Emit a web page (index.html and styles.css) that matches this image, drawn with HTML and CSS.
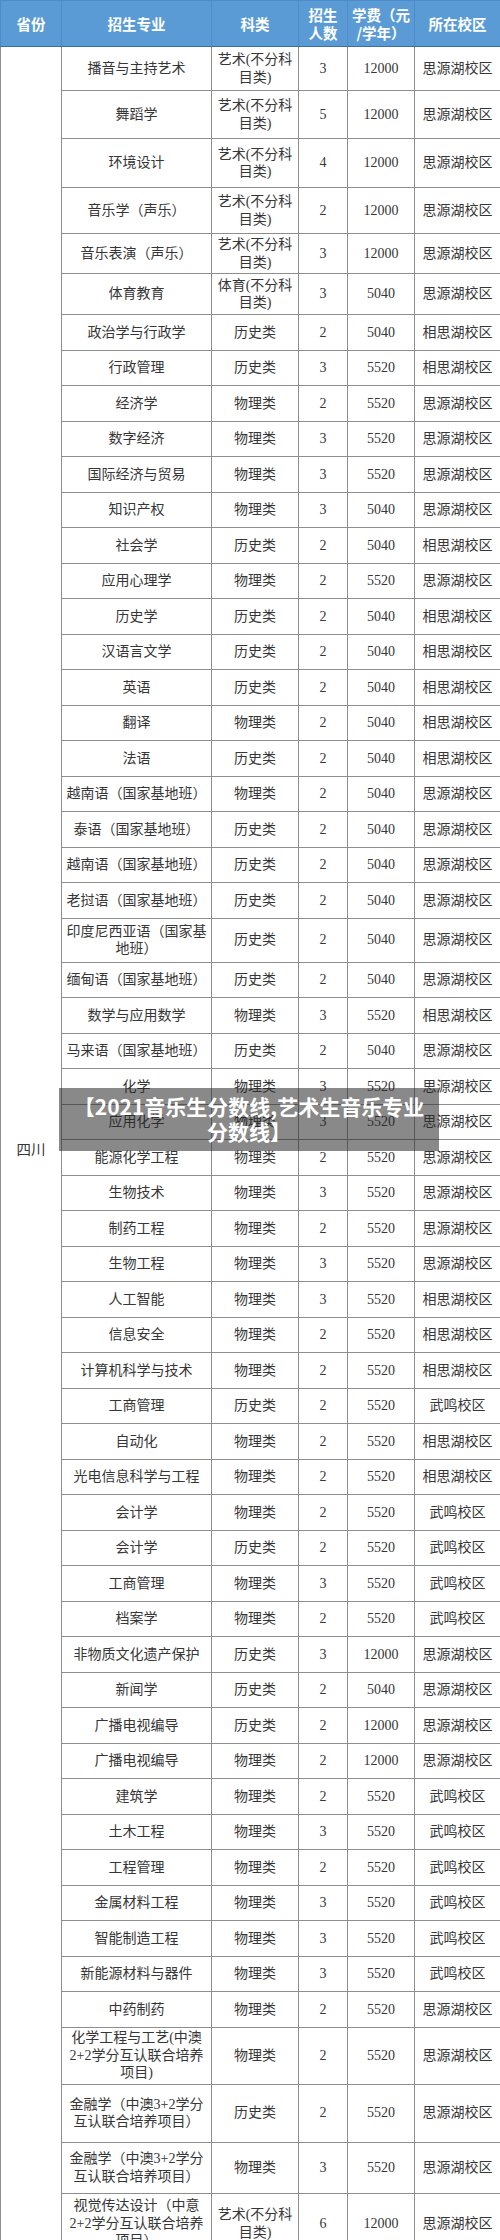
FILE: index.html
```html
<!DOCTYPE html>
<html lang="zh-CN">
<head>
<meta charset="utf-8">
<title>2021音乐生分数线</title>
<link rel="stylesheet" href="styles.css">
</head>
<body>
<div class="page">
<table class="plan">
<colgroup>
<col class="c-prov"><col class="c-major"><col class="c-type"><col class="c-num"><col class="c-fee"><col class="c-campus">
</colgroup>
<thead>
<tr class="head"><th>省份</th><th>招生专业</th><th>科类</th><th>招生<br>人数</th><th>学费（元<br>/学年）</th><th>所在校区</th></tr>
</thead>
<tbody>
<tr class="h44"><td class="prov" rowspan="58">四川</td><td>播音与主持艺术</td><td>艺术(不分科<br>目类)</td><td>3</td><td>12000</td><td>思源湖校区</td></tr>
<tr class="h48"><td>舞蹈学</td><td>艺术(不分科<br>目类)</td><td>5</td><td>12000</td><td>思源湖校区</td></tr>
<tr class="h49"><td>环境设计</td><td>艺术(不分科<br>目类)</td><td>4</td><td>12000</td><td>思源湖校区</td></tr>
<tr class="h46"><td>音乐学（声乐）</td><td>艺术(不分科<br>目类)</td><td>2</td><td>12000</td><td>思源湖校区</td></tr>
<tr class="h40"><td>音乐表演（声乐）</td><td>艺术(不分科<br>目类)</td><td>3</td><td>12000</td><td>思源湖校区</td></tr>
<tr class="h41"><td>体育教育</td><td>体育(不分科<br>目类)</td><td>3</td><td>5040</td><td>思源湖校区</td></tr>
<tr><td>政治学与行政学</td><td>历史类</td><td>2</td><td>5040</td><td>相思湖校区</td></tr>
<tr><td>行政管理</td><td>历史类</td><td>3</td><td>5520</td><td>相思湖校区</td></tr>
<tr><td>经济学</td><td>物理类</td><td>2</td><td>5520</td><td>思源湖校区</td></tr>
<tr><td>数字经济</td><td>物理类</td><td>3</td><td>5520</td><td>思源湖校区</td></tr>
<tr><td>国际经济与贸易</td><td>物理类</td><td>3</td><td>5520</td><td>思源湖校区</td></tr>
<tr><td>知识产权</td><td>物理类</td><td>3</td><td>5040</td><td>思源湖校区</td></tr>
<tr><td>社会学</td><td>历史类</td><td>2</td><td>5040</td><td>相思湖校区</td></tr>
<tr><td>应用心理学</td><td>物理类</td><td>2</td><td>5520</td><td>思源湖校区</td></tr>
<tr><td>历史学</td><td>历史类</td><td>2</td><td>5040</td><td>相思湖校区</td></tr>
<tr><td>汉语言文学</td><td>历史类</td><td>2</td><td>5040</td><td>相思湖校区</td></tr>
<tr><td>英语</td><td>历史类</td><td>2</td><td>5040</td><td>相思湖校区</td></tr>
<tr><td>翻译</td><td>物理类</td><td>2</td><td>5040</td><td>相思湖校区</td></tr>
<tr><td>法语</td><td>历史类</td><td>2</td><td>5040</td><td>相思湖校区</td></tr>
<tr><td>越南语（国家基地班）</td><td>物理类</td><td>2</td><td>5040</td><td>思源湖校区</td></tr>
<tr><td>泰语（国家基地班）</td><td>历史类</td><td>2</td><td>5040</td><td>思源湖校区</td></tr>
<tr><td>越南语（国家基地班）</td><td>历史类</td><td>2</td><td>5040</td><td>思源湖校区</td></tr>
<tr><td>老挝语（国家基地班）</td><td>历史类</td><td>2</td><td>5040</td><td>思源湖校区</td></tr>
<tr class="h44"><td>印度尼西亚语（国家基<br>地班）</td><td>历史类</td><td>2</td><td>5040</td><td>思源湖校区</td></tr>
<tr><td>缅甸语（国家基地班）</td><td>历史类</td><td>2</td><td>5040</td><td>思源湖校区</td></tr>
<tr><td>数学与应用数学</td><td>物理类</td><td>3</td><td>5520</td><td>相思湖校区</td></tr>
<tr><td>马来语（国家基地班）</td><td>历史类</td><td>2</td><td>5040</td><td>思源湖校区</td></tr>
<tr><td>化学</td><td>物理类</td><td>3</td><td>5520</td><td>思源湖校区</td></tr>
<tr><td>应用化学</td><td>物理类</td><td>3</td><td>5520</td><td>思源湖校区</td></tr>
<tr><td>能源化学工程</td><td>物理类</td><td>2</td><td>5520</td><td>思源湖校区</td></tr>
<tr><td>生物技术</td><td>物理类</td><td>3</td><td>5520</td><td>思源湖校区</td></tr>
<tr><td>制药工程</td><td>物理类</td><td>2</td><td>5520</td><td>思源湖校区</td></tr>
<tr><td>生物工程</td><td>物理类</td><td>3</td><td>5520</td><td>思源湖校区</td></tr>
<tr><td>人工智能</td><td>物理类</td><td>3</td><td>5520</td><td>相思湖校区</td></tr>
<tr><td>信息安全</td><td>物理类</td><td>2</td><td>5520</td><td>相思湖校区</td></tr>
<tr><td>计算机科学与技术</td><td>物理类</td><td>2</td><td>5520</td><td>相思湖校区</td></tr>
<tr><td>工商管理</td><td>历史类</td><td>2</td><td>5520</td><td>武鸣校区</td></tr>
<tr><td>自动化</td><td>物理类</td><td>2</td><td>5520</td><td>相思湖校区</td></tr>
<tr><td>光电信息科学与工程</td><td>物理类</td><td>2</td><td>5520</td><td>相思湖校区</td></tr>
<tr><td>会计学</td><td>物理类</td><td>2</td><td>5520</td><td>武鸣校区</td></tr>
<tr><td>会计学</td><td>历史类</td><td>2</td><td>5520</td><td>武鸣校区</td></tr>
<tr><td>工商管理</td><td>物理类</td><td>3</td><td>5520</td><td>武鸣校区</td></tr>
<tr><td>档案学</td><td>物理类</td><td>2</td><td>5520</td><td>武鸣校区</td></tr>
<tr><td>非物质文化遗产保护</td><td>历史类</td><td>3</td><td>12000</td><td>思源湖校区</td></tr>
<tr><td>新闻学</td><td>历史类</td><td>2</td><td>5040</td><td>思源湖校区</td></tr>
<tr><td>广播电视编导</td><td>历史类</td><td>2</td><td>12000</td><td>思源湖校区</td></tr>
<tr><td>广播电视编导</td><td>物理类</td><td>2</td><td>12000</td><td>思源湖校区</td></tr>
<tr><td>建筑学</td><td>物理类</td><td>2</td><td>5520</td><td>武鸣校区</td></tr>
<tr><td>土木工程</td><td>物理类</td><td>3</td><td>5520</td><td>武鸣校区</td></tr>
<tr><td>工程管理</td><td>物理类</td><td>2</td><td>5520</td><td>武鸣校区</td></tr>
<tr><td>金属材料工程</td><td>物理类</td><td>3</td><td>5520</td><td>武鸣校区</td></tr>
<tr><td>智能制造工程</td><td>物理类</td><td>3</td><td>5520</td><td>武鸣校区</td></tr>
<tr><td>新能源材料与器件</td><td>物理类</td><td>3</td><td>5520</td><td>武鸣校区</td></tr>
<tr><td>中药制药</td><td>物理类</td><td>2</td><td>5520</td><td>思源湖校区</td></tr>
<tr class="h57"><td>化学工程与工艺(中澳<br>2+2学分互认联合培养<br>项目)</td><td>物理类</td><td>2</td><td>5520</td><td>思源湖校区</td></tr>
<tr class="h58"><td>金融学（中澳3+2学分<br>互认联合培养项目）</td><td>历史类</td><td>2</td><td>5520</td><td>思源湖校区</td></tr>
<tr class="h51"><td>金融学（中澳3+2学分<br>互认联合培养项目）</td><td>物理类</td><td>3</td><td>5520</td><td>思源湖校区</td></tr>
<tr class="h61"><td>视觉传达设计（中意<br>2+2学分互认联合培养<br>项目）</td><td>艺术(不分科<br>目类)</td><td>6</td><td>12000</td><td>思源湖校区</td></tr>
</tbody>
</table>
<div class="banner">【2021音乐生分数线,艺术生音乐专业分数线】</div>
</div>
</body>
</html>
```
FILE: styles.css
```css
html, body {
  margin: 0;
  padding: 0;
  background: #ffffff;
}
body {
  width: 500px;
  font-family: "Liberation Serif", "Noto Sans CJK SC", serif;
  font-size: 14px;
  color: #363636;
}
.page {
  position: relative;
  width: 500px;
}
.plan {
  width: 500px;
  border-collapse: collapse;
  table-layout: fixed;
}
.c-prov { width: 61px; }
.c-major { width: 150px; }
.c-type { width: 87px; }
.c-num { width: 49px; }
.c-fee { width: 67px; }
.c-campus { width: 86px; }

.plan th,
.plan td {
  border: 1px solid #8e8e8e;
  text-align: center;
  vertical-align: middle;
  padding: 0 2px;
  line-height: 17.5px;
  white-space: nowrap;
}
.plan th {
  background: #5b9bd5;
  color: #ffffff;
  font-family: "Noto Sans CJK SC", sans-serif;
  font-weight: 700;
  font-size: 14.5px;
  border-color: #4d8cc9;
  border-bottom-color: #3f6f9f;
}
.plan .head { height: 46px; }
.plan tbody tr { height: 35.5px; }
.plan tbody tr.h40 { height: 40px; }
.plan tbody tr.h41 { height: 41px; }
.plan tbody tr.h44 { height: 44px; }
.plan tbody tr.h46 { height: 46px; }
.plan tbody tr.h48 { height: 48px; }
.plan tbody tr.h49 { height: 49px; }
.plan tbody tr.h51 { height: 51px; }
.plan tbody tr.h57 { height: 57px; }
.plan tbody tr.h58 { height: 58px; }
.plan tbody tr.h61 { height: 61px; }
.plan td.prov {
  font-size: 14.5px;
}

.banner {
  position: absolute;
  left: 59px;
  top: 1088px;
  width: 380px;
  height: 63px;
  box-sizing: border-box;
  padding: 6px 10px 0;
  background: rgba(40, 40, 40, 0.55);
  color: #ffffff;
  font-family: "Noto Sans CJK SC", sans-serif;
  font-weight: 700;
  font-size: 21px;
  line-height: 25px;
  text-align: center;
}
```
